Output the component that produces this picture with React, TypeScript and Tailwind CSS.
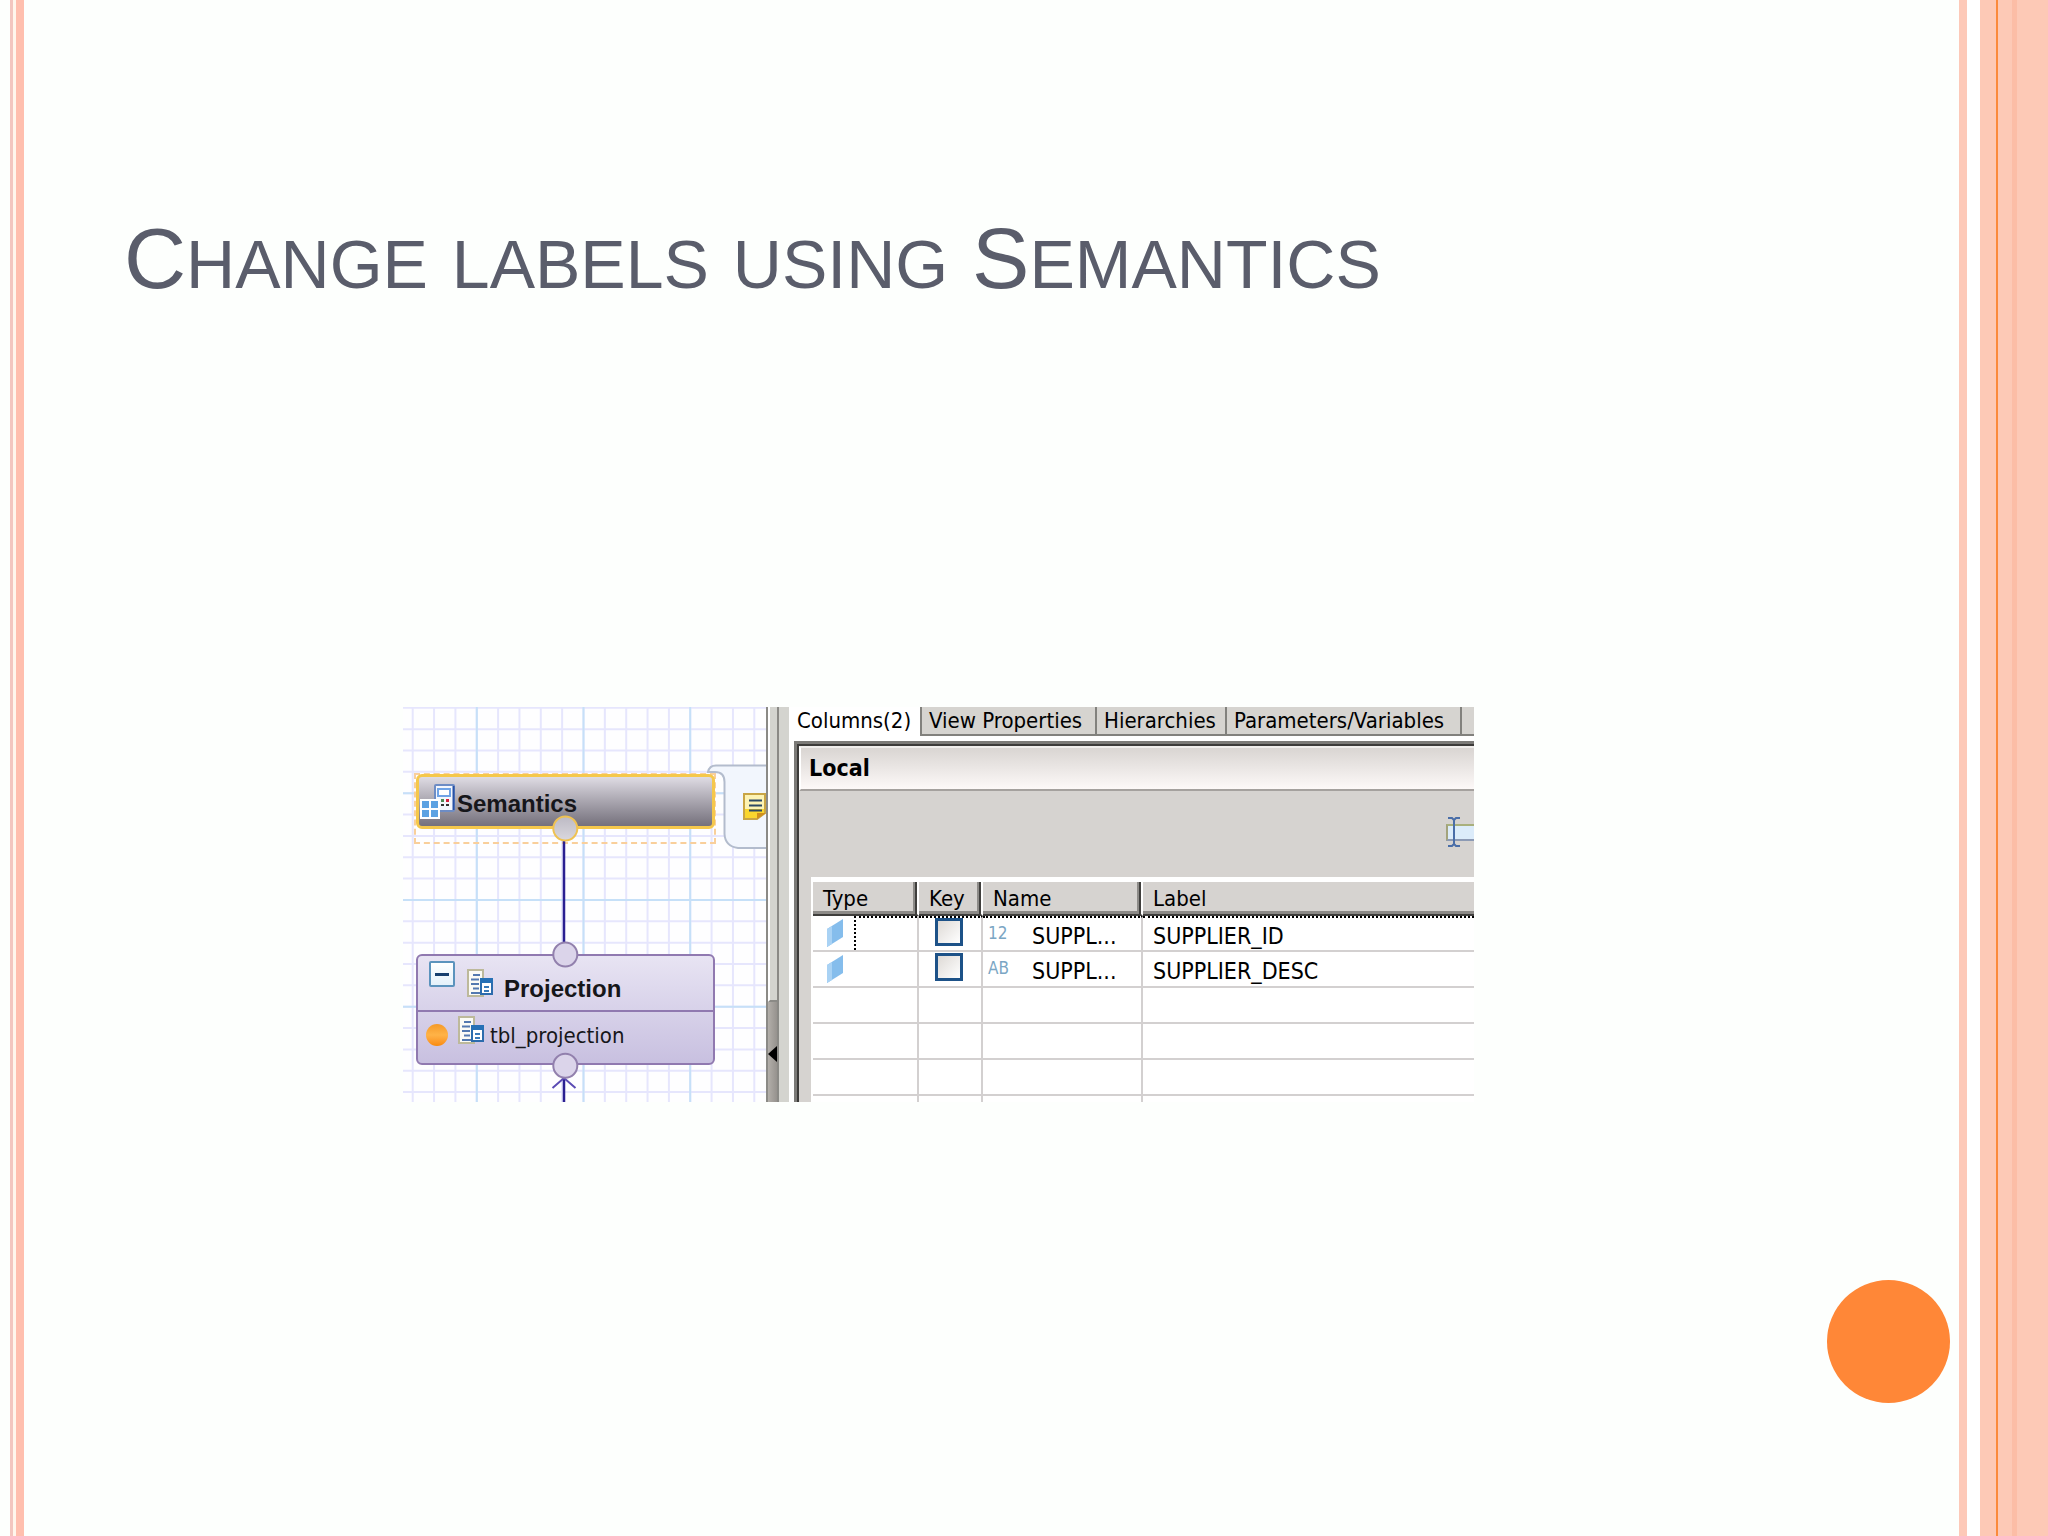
import { useState } from "react";

const tabs = [
  { label: "View Properties", width: "w-[175px]" },
  { label: "Hierarchies", width: "w-[130px]" },
  { label: "Parameters/Variables", width: "w-[235px]" },
];

const columns = [
  { id: "supplier_id", kind: "12", name: "SUPPL...", label: "SUPPLIER_ID" },
  { id: "supplier_desc", kind: "AB", name: "SUPPL...", label: "SUPPLIER_DESC" },
];

const emptyRows = [0, 1, 2, 3];

const steps = Array.from({ length: 20 }, (_, i) => i);

function LeftStripes() {
  return (
    <div className="flex shrink-0 pl-2.5">
      <div className="w-[3px] bg-[#f3c6bf]" />
      <div className="w-[3px] bg-[#fff6ec]" />
      <div className="w-2 bg-[#ffbfae]" />
    </div>
  );
}

function RightStripes() {
  return (
    <div className="flex shrink-0">
      <div className="w-2 bg-[#fdc9b8]" />
      <div className="w-[13px] bg-white" />
      <div className="w-4 bg-[#fdc9b6]" />
      <div className="w-0.5 bg-[#fb8a3c]" />
      <div className="w-3.5 bg-[#fdc9b6]" />
      <div className="w-[5px] bg-[#fcbda6]" />
      <div className="w-[31px] bg-[#fdc9b6]" />
    </div>
  );
}

function Grid() {
  return (
    <svg className="absolute inset-0" width="363" height="395" viewBox="0 0 363 395">
      {steps.map((i) => (
        <g key={i} stroke="#e6e6fd" strokeWidth="2">
          <line x1={9.7 + i * 21.35} x2={9.7 + i * 21.35} y1="0" y2="395" />
          <line x1="0" x2="363" y1={0.8 + i * 21.35} y2={0.8 + i * 21.35} />
        </g>
      ))}
      <g stroke="#c6e0f8" strokeWidth="2">
        <path d="M73.8 0V395M180.5 0V395M287.2 0V395" />
        <path d="M0 86.2H363M0 193H363M0 299.7H363" />
      </g>
    </svg>
  );
}

/* Connectors, ports and the arrow head, drawn above the nodes */
function Links() {
  return (
    <svg className="pointer-events-none absolute inset-0" width="363" height="395" viewBox="0 0 363 395">
      <defs>
        <linearGradient id="port" x1="0" y1="0" x2="0" y2="1">
          <stop offset="0" stopColor="#bdbac4" />
          <stop offset="1" stopColor="#dad8de" />
        </linearGradient>
      </defs>
      <path d="M161 132V236M161 370V395" stroke="#2a1f92" strokeWidth="2.5" />
      <path d="M149.5 381L161 371L172.5 381" fill="none" stroke="#5b4bb4" strokeWidth="2" />
      <circle cx="162.3" cy="121.5" r="12" fill="url(#port)" stroke="#efc252" strokeWidth="2" />
      <circle cx="162.3" cy="247.5" r="12" fill="#dbd4ea" stroke="#9280ad" strokeWidth="2" />
      <circle cx="162.3" cy="358.7" r="12" fill="#dbd4ea" stroke="#9280ad" strokeWidth="2" />
    </svg>
  );
}

function Palette() {
  return (
    <svg className="absolute right-0 top-14" width="60" height="90" viewBox="0 0 60 90">
      <path
        d="M2 9C3 4 6 2.5 10 2.5H62V85H32C24 84 19 80 18.5 71V19C18.5 12 15 9 9 9Z"
        fill="#f2f6fd"
        stroke="#b3bccd"
        strokeWidth="2"
      />
      <path d="M38 31H59V50L51 56H38Z" fill="#fdf3b4" stroke="#c9a545" strokeWidth="2" />
      <path d="M39 46H58V50L51 55H39Z" fill="#fad62e" />
      <path d="M51 56V50H60Z" fill="#d08f1c" />
      <path d="M43 37.5H56M43 42.5H56M43 47.5H56" stroke="#2d4964" strokeWidth="2" />
    </svg>
  );
}

function SemanticsIcon() {
  return (
    <svg width="36" height="36" viewBox="0 0 36 36" className="shrink-0">
      <rect x="15" y="1" width="19" height="26" rx="1" fill="#f4f7fd" stroke="#6d8cc4" strokeWidth="2" />
      <path d="M33.5 2V26" stroke="#2750a5" strokeWidth="2" />
      <rect x="18" y="5" width="12" height="7" fill="#fff" stroke="#6fa3e6" strokeWidth="2" />
      <rect x="21" y="15" width="3" height="3" fill="#4e8a55" />
      <rect x="26" y="15" width="3" height="3" fill="#d3213f" />
      <rect x="21" y="20" width="3" height="2" fill="#333" />
      <rect x="26" y="20" width="3" height="2" fill="#333" />
      <rect x="0" y="15" width="20" height="20" fill="#fff" />
      <path d="M2 17H9V24H2ZM11 17H18V24H11ZM2 26H9V33H2ZM11 26H18V33H11Z" fill="#5da2e2" />
    </svg>
  );
}

function ProjectionIcon() {
  return (
    <svg width="26" height="28" viewBox="0 0 26 28" className="shrink-0">
      <rect x="1" y="1" width="15" height="26" fill="#fbfbf6" stroke="#bdb99b" strokeWidth="2" />
      <path d="M6 6H13M4 10.5H12M4 15H12M6 19.5H12M4 24H13" stroke="#5479b0" strokeWidth="2" />
      <rect x="14" y="10" width="11" height="15" fill="#fff" stroke="#2c6cad" strokeWidth="2" />
      <rect x="13" y="9" width="13" height="5" fill="#2670b5" />
      <path d="M17 18H22M17 22H22" stroke="#3a7ab8" strokeWidth="2" />
    </svg>
  );
}

function Diagram() {
  return (
    <div className="relative w-[363px] shrink-0 overflow-hidden bg-[#fefeff]">
      <Grid />
      <Palette />
      <div className="absolute left-[11px] top-[66px] h-[71px] w-[302px] border-2 border-dashed border-[#f9cf9b]" />
      <div className="absolute left-[13px] top-[67px] flex h-[55px] w-[299px] items-center gap-px rounded-md border-[3px] border-[#f5c84c] bg-linear-to-b from-[#dfdce4] to-[#75717c] pl-px">
        <SemanticsIcon />
        <span className="pt-1 text-2xl font-bold text-[#16161a]">Semantics</span>
      </div>
      <div className="absolute left-[13px] top-[247px] flex h-[111px] w-[299px] flex-col rounded-md border-2 border-[#9079b0] bg-linear-to-b from-[#e8e4f3] to-[#c8c0e0]">
        <div className="flex h-[56px] items-start border-b-2 border-[#9079b0] pl-[11px] pt-[5px]">
          <button
            aria-label="Collapse"
            className="flex size-[26px] items-center justify-center rounded-xs border-2 border-[#5b93bd] bg-linear-to-b from-white to-[#e4f1fa]"
          >
            <span className="h-[3px] w-3.5 bg-[#173f6e]" />
          </button>
          <div className="flex gap-[11px] pl-3 pt-2">
            <ProjectionIcon />
            <span className="pt-1 text-2xl font-bold text-[#16161a]">Projection</span>
          </div>
        </div>
        <div className="flex items-start gap-1.5 pl-2 pt-1">
          <div className="flex pt-2 pr-1">
            <span className="size-[22px] rounded-full bg-linear-to-b from-[#f59a26] via-[#ffb347] to-[#f98a05]" />
          </div>
          <ProjectionIcon />
          <span className="pt-1.5 font-['DejaVu_Sans_Condensed','DejaVu_Sans',sans-serif] text-[22px] leading-7 text-[#16161a]">
            tbl_projection
          </span>
        </div>
      </div>
      <Links />
    </div>
  );
}

function Sash() {
  return (
    <div className="flex w-[23px] shrink-0 bg-[#d4d4cf]">
      <div className="flex w-[13px] flex-col border-x-2 border-[#8b8a86]">
        <div className="h-[295px] border-b-2 border-l-2 border-b-[#8b8a86] border-l-white" />
        <button
          aria-label="Collapse pane"
          className="flex flex-1 items-start bg-linear-to-r from-[#b3afaa] to-[#96928e] pt-11"
        >
          <svg width="9" height="16" viewBox="0 0 9 16">
            <path d="M9 0V16L0 8Z" fill="#000" />
          </svg>
        </button>
      </div>
    </div>
  );
}

function Tabs() {
  return (
    <div role="tablist" className="flex shrink-0 overflow-hidden text-[22px] leading-[27px]">
      <button role="tab" aria-selected className="w-[131px] shrink-0 pb-0.5 pl-2 text-left">
        Columns(2)
      </button>
      {tabs.map((tab) => (
        <button
          key={tab.label}
          role="tab"
          aria-selected={false}
          className={`${tab.width} shrink-0 border-b-2 border-l-2 border-[#82817d] bg-[#d6d4d0] pl-[7px] text-left whitespace-nowrap`}
        >
          {tab.label}
        </button>
      ))}
      <div className="flex-1 border-b-2 border-l-2 border-[#82817d] bg-[#d6d4d0]" />
    </div>
  );
}

function TypeIcon() {
  return (
    <svg width="16" height="28" viewBox="0 0 16 28">
      <path d="M0 10L16 0V18L0 28Z" fill="#85bdec" />
      <path d="M0 10L5 7V25L0 28Z" fill="#a9d2f4" />
    </svg>
  );
}

const head =
  "border-b-2 border-b-[#403f3d] bg-[#d6d3d0] pt-1.5 pb-0 pl-2.5 text-left align-middle font-normal";
const headSplit =
  "border-r-2 border-r-white shadow-[inset_0_5px_0_#fff,inset_-2px_0_0_#403f3d,inset_-4px_-3px_0_#8d8b88]";
const headLast = "shadow-[inset_0_5px_0_#fff,inset_0_-3px_0_#8d8b88]";
const cell = "border-b-2 border-[#d3d0d0] p-0 align-middle";
const focusTop = "border-t-2 border-t-black [border-top-style:dotted]";

function ColumnsTable() {
  const [keys, setKeys] = useState<string[]>([]);

  const toggleKey = (id: string) =>
    setKeys((prev) => (prev.includes(id) ? prev.filter((k) => k !== id) : [...prev, id]));

  return (
    <div className="overflow-hidden border-l-2 border-white bg-white">
      <table className="w-full table-fixed border-separate border-spacing-0">
        <thead>
          <tr className="h-[39px] text-[22px] leading-7">
            <th className={`${head} ${headSplit} w-[106px]`}>Type</th>
            <th className={`${head} ${headSplit} w-[64px]`}>Key</th>
            <th className={`${head} ${headSplit} w-[160px]`}>Name</th>
            <th className={`${head} ${headLast}`}>Label</th>
          </tr>
        </thead>
        <tbody className="text-[23px] leading-7">
          {columns.map((col, i) => (
            <tr key={col.id} className="h-9">
              <td className={`${cell} border-r-2`}>
                <div className="flex h-[34px] pl-3.5">
                  <div className="flex w-[27px] items-center">
                    <TypeIcon />
                  </div>
                  {i === 0 && <div className="flex-1 border-l-2 border-t-2 border-dotted border-black" />}
                </div>
              </td>
              <td className={`${cell} border-r-2 ${i === 0 ? focusTop : ""}`}>
                <div className="flex justify-center pr-0.5 pb-1">
                  <input
                    type="checkbox"
                    aria-label={`${col.label} is key`}
                    checked={keys.includes(col.id)}
                    onChange={() => toggleKey(col.id)}
                    className="size-7 appearance-none border-[3px] border-[#1d5288] bg-linear-to-br from-[#dedad6] to-white checked:bg-[#1d5288]"
                  />
                </div>
              </td>
              <td className={`${cell} border-r-2 ${i === 0 ? focusTop : ""}`}>
                <div className="flex items-center pl-[5px]">
                  <span className="w-11 pb-0.5 text-[17px]/6 text-[#7ba6c4]">{col.kind}</span>
                  <span className="pt-1">{col.name}</span>
                </div>
              </td>
              <td className={`${cell} ${i === 0 ? focusTop : ""}`}>
                <div className="pt-1 pl-2.5">{col.label}</div>
              </td>
            </tr>
          ))}
          {emptyRows.map((row) => (
            <tr key={row} className="h-9">
              <td className={`${cell} border-r-2`} />
              <td className={`${cell} border-r-2`} />
              <td className={`${cell} border-r-2`} />
              <td className={cell} />
            </tr>
          ))}
        </tbody>
      </table>
    </div>
  );
}

function FilterBox() {
  return (
    <div className="relative flex w-[28px]">
      <input
        aria-label="Filter"
        className="h-[17px] w-full border-y-2 border-l-2 border-t-[#a9b07c] border-b-[#8c9ab4] border-l-[#a3a37c] bg-[#dcecfa]"
      />
      <svg className="pointer-events-none absolute -top-2 left-0.5" width="12" height="32" viewBox="0 0 12 32">
        <path d="M0 2H4L6 4L8 2H12M6 3V29M0 30H4L6 28L8 30H12" fill="none" stroke="#4a6ea8" strokeWidth="2" />
      </svg>
    </div>
  );
}

function DetailsPane() {
  return (
    <div className="flex min-w-0 flex-1 flex-col bg-white font-['DejaVu_Sans_Condensed','DejaVu_Sans',sans-serif] text-black">
      <Tabs />
      <div className="flex flex-1 flex-col pt-[5px] pl-[5px]">
        <div className="flex flex-1 flex-col border-l-[3px] border-t-[3px] border-[#7b7a77]">
          <div className="flex flex-1 flex-col border-l-2 border-t-2 border-[#3c3b39] bg-[#d6d3d0]">
            <div className="flex h-[45px] items-center border-b-2 border-t-2 border-l-2 border-l-white border-t-[#efedeb] border-b-[#a5a19e] bg-linear-to-b from-[#d9d5d2] to-[#fdf9f8] pl-2 text-[23px] font-bold">
              Local
            </div>
            <div className="flex h-[86px] items-center justify-end pb-1">
              <FilterBox />
            </div>
            <div className="pl-3">
              <ColumnsTable />
            </div>
          </div>
        </div>
      </div>
    </div>
  );
}

export default function App() {
  return (
    <div className="flex min-h-screen bg-[#fdfffd] font-['Liberation_Sans',Arial,sans-serif]">
      <LeftStripes />
      <main className="flex min-w-0 flex-1 flex-col pt-[210px]">
        <h1 className="pl-[100px] text-[86px] leading-[96px] text-[#5a5d6b] uppercase">
          C<span className="text-[68px] leading-none">hange</span>{" "}
          <span className="text-[68px] leading-none">labels</span>{" "}
          <span className="text-[68px] leading-none">using</span> S
          <span className="text-[68px] leading-none">emantics</span>
        </h1>
        <div className="mt-[401px] mr-[485px] ml-[379px] flex h-[395px] overflow-hidden">
          <Diagram />
          <Sash />
          <DetailsPane />
        </div>
        <div className="mt-auto flex justify-end pr-[9px] pb-[133px]">
          <div className="size-[123px] rounded-full bg-[#ff8737]" />
        </div>
      </main>
      <RightStripes />
    </div>
  );
}
